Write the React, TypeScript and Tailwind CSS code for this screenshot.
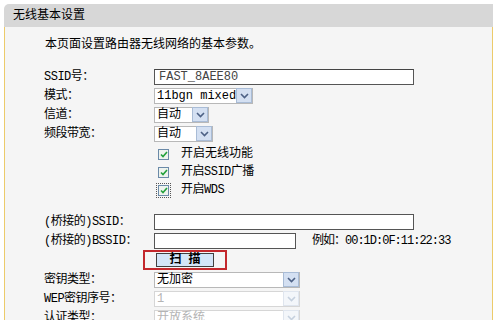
import React from 'react';

const cn = '"Liberation Mono", "Noto Sans CJK SC", monospace';

function Arrow({ disabled }: { disabled?: boolean }) {
    return (
        <span
            className={`flex h-[15px] w-[16px] shrink-0 items-center justify-center border ${disabled ? 'border-[#dfe5ee] bg-[#f3f6fa]' : 'border-[#a9bcd6] bg-[#d4e0f2]'}`}
        >
            <svg width="9" height="6" viewBox="0 0 9 6">
                <path d="M1 1 L4.5 4.5 L8 1" fill="none" stroke={disabled ? '#c5d0de' : '#4d6185'} strokeWidth="1.6" />
            </svg>
        </span>
    );
}

function Select({ value, width, disabled }: { value: string; width: string; disabled?: boolean }) {
    return (
        <div className={`flex h-[16px] items-center border ${disabled ? 'border-[#d6d6d6] text-[#b4b4b4]' : 'border-[#b8b8b8] text-black'} bg-white ${width}`}>
            <span className="flex-1 whitespace-nowrap pl-[2px] leading-none">{value}</span>
            <Arrow disabled={disabled} />
        </div>
    );
}

function Check({ focus }: { focus?: boolean }) {
    return (
        <span className={`flex h-[15px] w-[15px] items-center justify-center ${focus ? 'border border-dotted border-[#555]' : ''}`}>
            <span className="flex h-[11px] w-[11px] items-center justify-center border border-[#6b8aa8] bg-[#eef3ee]">
                <svg width="8" height="7" viewBox="0 0 8 7">
                    <path d="M1 3.5 L3 5.5 L7 1" fill="none" stroke="#22a03a" strokeWidth="1.6" />
                </svg>
            </span>
        </span>
    );
}

function Row({ label, children, h = 'h-[19px]' }: { label?: string; children?: React.ReactNode; h?: string }) {
    return (
        <div className={`flex items-center ${h}`}>
            <div className="w-[110px] shrink-0 whitespace-nowrap tracking-[-0.5px]">{label}</div>
            <div className="flex items-center">{children}</div>
        </div>
    );
}

export default function App() {
    return (
        <div className="w-[500px] h-[320px] overflow-hidden bg-white pt-[4px] pl-[4px] text-[12px] text-black" style={{ fontFamily: cn }}>
            {/* header */}
            <div className="flex h-[23px] w-[489px] items-center rounded-tl-[5px] bg-[#d7d7d7] pl-[9px]">
                无线基本设置
            </div>
            {/* body */}
            <div className="h-[300px] w-[489px] border-x border-[#eccb6a] bg-[#f5f5f5] pl-[39px] pt-[8px]">
                <div className="flex h-[20px] items-center pl-[1px]">本页面设置路由器无线网络的基本参数。</div>
                <div className="mt-[12px]">
                    <Row label="SSID号：">
                        <div className="flex h-[16px] w-[260px] items-center border border-[#555] border-t-[#444] bg-white pl-[4px] text-[#444]" style={{ fontFamily: '"Liberation Mono", monospace' }}>
                            FAST_8AEE80
                        </div>
                    </Row>
                    <Row label="模式：">
                        <Select value="11bgn mixed" width="w-[99px]" />
                    </Row>
                    <Row label="信道：">
                        <Select value="自动" width="w-[55px]" />
                    </Row>
                    <Row label="频段带宽：">
                        <Select value="自动" width="w-[59px]" />
                    </Row>
                    <div className="mt-[2px] pl-[112px]">
                        <div className="flex h-[18px] items-center gap-[10px]"><Check /><span>开启无线功能</span></div>
                        <div className="flex h-[18px] items-center gap-[10px]"><Check /><span className="tracking-[-0.5px]">开启SSID广播</span></div>
                        <div className="flex h-[18px] items-center gap-[10px]"><Check focus /><span className="tracking-[-0.5px]">开启WDS</span></div>
                    </div>
                    <div className="mt-[13px]">
                        <Row label="(桥接的)SSID：">
                            <div className="h-[16px] w-[260px] border border-[#555] bg-white" />
                        </Row>
                        <Row label="(桥接的)BSSID：">
                            <div className="h-[16px] w-[142px] border border-[#555] bg-white" />
                            <span className="ml-[16px] whitespace-nowrap tracking-[-1px]">例如：00:1D:0F:11:22:33</span>
                        </Row>
                        <div className="flex h-[20px] items-center pl-[99px]">
                            <div className="flex h-[20px] w-[84px] items-center justify-center border-2 border-[#c3282c]">
                                <button className="flex h-[14px] w-[58px] items-center justify-center border border-[#404040] bg-[#d3e5f7] text-[12px] font-bold leading-none">
                                    扫&nbsp;描
                                </button>
                            </div>
                        </div>
                        <Row label="密钥类型：">
                            <Select value="无加密" width="w-[146px]" />
                        </Row>
                        <Row label="WEP密钥序号：">
                            <Select value="1" width="w-[146px]" disabled />
                        </Row>
                        <Row label="认证类型：">
                            <Select value="开放系统" width="w-[146px]" disabled />
                        </Row>
                    </div>
                </div>
            </div>
        </div>
    );
}
